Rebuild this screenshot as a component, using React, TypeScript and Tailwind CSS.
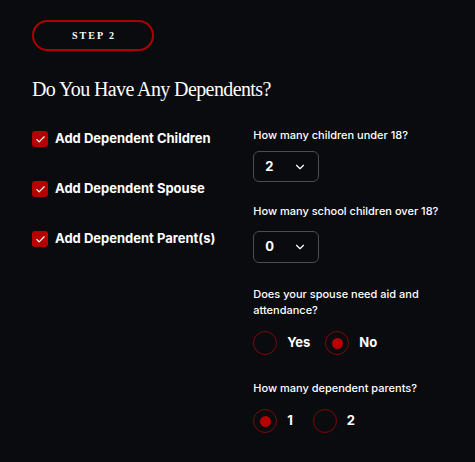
import { useState } from 'react'
import { Check, ChevronDown } from 'lucide-react'

const sans = { fontFamily: 'Inter, "Open Sans", sans-serif' }
const serif = { fontFamily: '"Liberation Serif", serif' }

const dependents = [
  'Add Dependent Children',
  'Add Dependent Spouse',
  'Add Dependent Parent(s)',
]

function SelectBox({ value, className }: { value: string; className: string }) {
  return (
    <div className={`flex w-[66px] items-center justify-between rounded-[6px] border border-[#4b4d52] pl-[11px] pr-[11px] ${className}`}>
      <span className="text-[13px] font-bold text-white">{value}</span>
      <ChevronDown className="h-[14px] w-[14px] text-white" strokeWidth={2} />
    </div>
  )
}

function Radio({ label, checked }: { label: string; checked: boolean }) {
  return (
    <label className="flex items-center gap-[10px]">
      <span className="flex h-[24px] w-[24px] items-center justify-center rounded-full border border-[#7c0a0a]">
        {checked && <span className="h-[11px] w-[11px] rounded-full bg-[#b80000]" />}
      </span>
      <span className="text-[13px] font-bold text-white">{label}</span>
    </label>
  )
}

export default function App() {
  const [checked] = useState([true, true, true])

  return (
    <div className="h-[462px] w-[475px] bg-[#0a0b0f] px-[32px] pt-[20px] text-white" style={sans}>
      <div
        className="flex h-[31px] w-[122px] items-center justify-center rounded-full border-2 border-[#ae0000] pl-[2px] text-[10px] font-bold tracking-[0.2em] text-white"
        style={serif}
      >
        STEP 2
      </div>

      <h2 className="mt-[25px] text-[20px] leading-[26px] tracking-[-0.03em] text-white" style={serif}>
        Do You Have Any Dependents?
      </h2>

      <div className="mt-[26px] flex">
        <div className="flex w-[222px] flex-col gap-[34px] pt-[3px]">
          {dependents.map((label, i) => (
            <label key={label} className="flex h-[16px] items-center gap-[7px]">
              <span className="flex h-[16px] w-[16px] items-center justify-center rounded-[3px] bg-[#b50000]">
                {checked[i] && <Check className="h-[11px] w-[11px] text-white" strokeWidth={2.5} />}
              </span>
              <span className="text-[13px] font-bold">{label}</span>
            </label>
          ))}
        </div>

        <div className="w-[196px] pl-[3px]">
          <p className="text-[11px] font-medium leading-[14px]">How many children under 18?</p>
          <SelectBox value="2" className="mt-[9px] h-[31px]" />

          <p className="mt-[22px] text-[11px] font-medium leading-[14px]">How many school children over 18?</p>
          <SelectBox value="0" className="mt-[13px] h-[32px]" />

          <p className="mt-[23px] text-[11px] font-medium leading-[16px]">
            Does your spouse need aid and attendance?
          </p>
          <div className="mt-[13px] flex gap-[15px]">
            <Radio label="Yes" checked={false} />
            <Radio label="No" checked />
          </div>

          <p className="mt-[26px] text-[11px] font-medium leading-[14px]">How many dependent parents?</p>
          <div className="mt-[14px] flex gap-[20px]">
            <Radio label="1" checked />
            <Radio label="2" checked={false} />
          </div>
        </div>
      </div>
    </div>
  )
}
